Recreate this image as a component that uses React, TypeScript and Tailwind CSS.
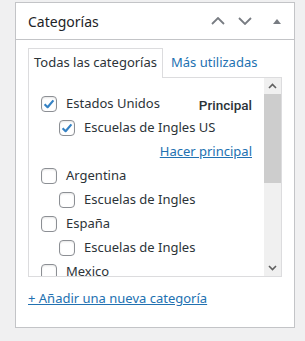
import React from "react";

const font = { fontFamily: '"Noto Sans", "Open Sans", sans-serif' };

function Box({ checked }: { checked?: boolean }) {
  return (
    <span className="relative w-4 h-4 shrink-0 rounded-[4px] border border-[#8c8f94] bg-white box-border shadow-[inset_0_1px_2px_rgba(0,0,0,0.1)]">
      {checked && (
        <svg width="16" height="16" viewBox="0 0 16 16" className="absolute -left-px -top-px">
          <path d="M3.6 8.2L6.6 11.2L12.4 4.4" fill="none" stroke="#3582c4" strokeWidth="2.2" strokeLinejoin="round" />
        </svg>
      )}
    </span>
  );
}

function Row({
  label,
  checked,
  indent,
  right,
}: {
  label: string;
  checked?: boolean;
  indent?: boolean;
  right?: React.ReactNode;
}) {
  return (
    <div className={`flex items-center h-6 ${indent ? "pl-[18px]" : ""}`}>
      <Box checked={checked} />
      <span className="ml-[9px] text-[13px] text-[#2c3338] whitespace-nowrap">{label}</span>
      {right && <span className="ml-auto">{right}</span>}
    </div>
  );
}

export default function App() {
  return (
    <div className="w-[305px] h-[341px] bg-[#f0f0f1] pt-[2px] pl-[15px]" style={font}>
      <div className="w-[280px] h-[326px] bg-white border border-[#c3c4c7] box-border">
        <div className="h-[37px] border-b border-[#c3c4c7] flex items-center pl-3 pr-[13px]">
          <span className="text-[14px] text-[#1d2327]">Categorías</span>
          <div className="ml-auto flex items-center">
            <svg width="14" height="8" viewBox="0 0 14 8" className="mr-[13px]">
              <path d="M1 7l6-6 6 6" fill="none" stroke="#787c82" strokeWidth="1.8" />
            </svg>
            <svg width="14" height="8" viewBox="0 0 14 8" className="mr-[21px]">
              <path d="M1 1l6 6 6-6" fill="none" stroke="#787c82" strokeWidth="1.8" />
            </svg>
            <svg width="8" height="5" viewBox="0 0 8 5">
              <path d="M0 5L4 0L8 5z" fill="#787c82" />
            </svg>
          </div>
        </div>
        <div className="px-3 pt-[9px]">
          <div className="flex items-end h-[28px]">
            <div className="h-[28px] border border-b-0 border-[#dcdcde] bg-white px-[5px] flex items-center text-[13px] text-[#2c3338] relative z-10 -mb-px pb-px box-content">
              Todas las categorías
            </div>
            <div className="h-[28px] flex items-center px-[8px] text-[13px] text-[#2271b1]">Más utilizadas</div>
          </div>
          <div className="h-[200px] border border-[#dcdcde] flex box-border">
            <div className="flex-1 overflow-hidden pt-[14px] pl-3 pr-3">
              <Row
                label="Estados Unidos"
                checked
                right={
                  <span className="text-[13.5px] font-medium text-[#2c3338] font-[Roboto,sans-serif]">
                    Principal
                  </span>
                }
              />
              <Row label="Escuelas de Ingles US" checked indent />
              <div className="h-6 flex items-center justify-end">
                <span className="text-[13px] text-[#2271b1] underline">Hacer principal</span>
              </div>
              <Row label="Argentina" />
              <Row label="Escuelas de Ingles" indent />
              <Row label="España" />
              <Row label="Escuelas de Ingles" indent />
              <Row label="Mexico" />
            </div>
            <div className="w-[17px] bg-[#f0f0f0] flex flex-col">
              <div className="h-[16px] flex items-center justify-center">
                <svg width="9" height="6" viewBox="0 0 9 6">
                  <path d="M1 5l3.5-3.5L8 5" fill="none" stroke="#606060" strokeWidth="1.6" />
                </svg>
              </div>
              <div className="mx-0 h-[89px] bg-[#cdcdcd]" />
              <div className="flex-1" />
              <div className="h-[16px] flex items-center justify-center">
                <svg width="9" height="6" viewBox="0 0 9 6">
                  <path d="M1 1l3.5 3.5L8 1" fill="none" stroke="#606060" strokeWidth="1.6" />
                </svg>
              </div>
            </div>
          </div>
          <div className="mt-[12px] text-[13px] text-[#2271b1] underline">+ Añadir una nueva categoría</div>
        </div>
      </div>
    </div>
  );
}
